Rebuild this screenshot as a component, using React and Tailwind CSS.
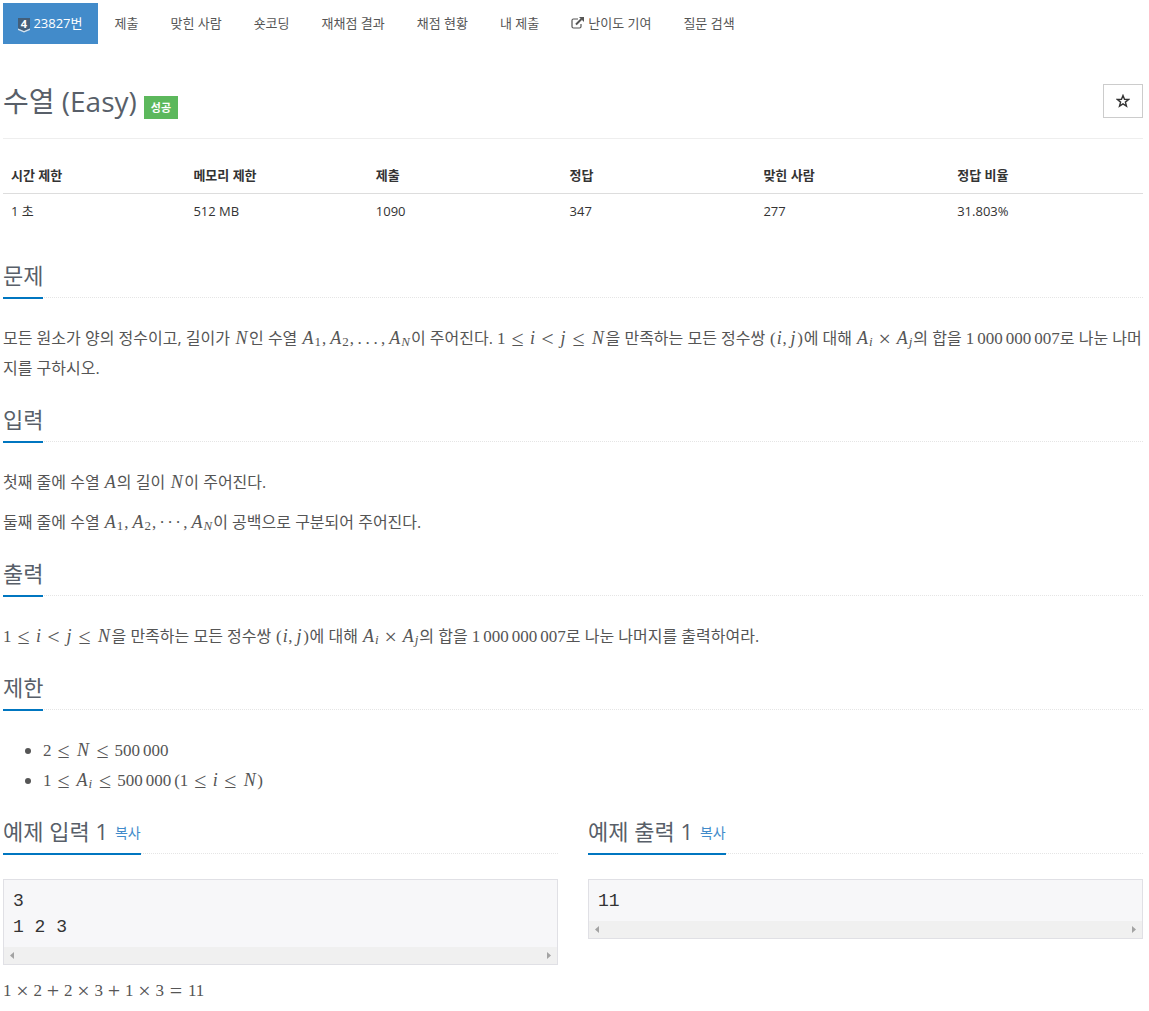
const NAV_ITEMS = [
  { label: '제출' },
  { label: '맞힌 사람' },
  { label: '숏코딩' },
  { label: '재채점 결과' },
  { label: '채점 현황' },
  { label: '내 제출' },
  { label: '난이도 기여', external: true },
  { label: '질문 검색' },
]

const INFO = [
  { label: '시간 제한', value: '1 초', width: 'w-[16%]' },
  { label: '메모리 제한', value: '512 MB', width: 'w-[16%]' },
  { label: '제출', value: '1090', width: 'w-[17%]' },
  { label: '정답', value: '347', width: 'w-[17%]' },
  { label: '맞힌 사람', value: '277', width: 'w-[17%]' },
  { label: '정답 비율', value: '31.803%', width: 'w-[17%]' },
]

const VAR_WIDTHS = {
  A: 'w-[13px]',
  N: 'w-[15px]',
  i: 'w-[6px]',
  j: 'w-[7px]',
}

/* Math */
const M = ({ children }) => (
  <span className="inline-block whitespace-nowrap font-['Liberation_Serif',serif] text-[17px] leading-5">{children}</span>
)

const V = ({ children }) => (
  <i className={`inline-block text-center text-lg leading-5 ${VAR_WIDTHS[children]}`}>{children}</i>
)

const Sub = ({ children, italic }) => (
  <sub className={`relative top-[2px] align-baseline text-[13px] leading-none ${italic ? 'italic' : ''} pr-px`}>{children}</sub>
)

const Rel = ({ children }) => (
  <span className="mx-[5px] inline-block w-[14px] text-center align-[-2px] text-[22px] leading-5">{children}</span>
)

const Bin = ({ children }) => (
  <span className="mx-1 inline-block w-[14px] text-center align-[-2px] text-[22px] leading-5">{children}</span>
)

const Comma = () => <span className="mr-[3px]">,</span>

const Paren = ({ children }) => (
  <span className="inline-block w-[7px] text-center">{children}</span>
)

const Dots = ({ char }) => (
  <>
    {[0, 1, 2].map(n => (
      <span key={n} className="mr-[3px] inline-block w-[5px] text-center">{char}</span>
    ))}
  </>
)

const Num = ({ groups }) => (
  <span className="inline-flex gap-[3px]">
    {groups.map((g, n) => <span key={n}>{g}</span>)}
  </span>
)

const Range = () => (
  <M>1<Rel>≤</Rel><V>i</V><Rel>&lt;</Rel><V>j</V><Rel>≤</Rel><V>N</V></M>
)

const Pair = () => <M><Paren>(</Paren><V>i</V><Comma /><V>j</V><Paren>)</Paren></M>

const Product = () => (
  <M><V>A</V><Sub italic>i</Sub><Bin>×</Bin><V>A</V><Sub italic>j</Sub></M>
)

const Sequence = ({ dots }) => (
  <M>
    <V>A</V><Sub>1</Sub><Comma /><V>A</V><Sub>2</Sub><Comma /><Dots char={dots} /><Comma /><V>A</V><Sub italic>N</Sub>
  </M>
)

const Modulus = () => <M><Num groups={['1', '000', '000', '007']} /></M>

function TierBadge() {
  return (
    <svg className="inline-block h-4 w-3 overflow-visible align-middle" viewBox="0 0 12 16" aria-hidden="true">
      <path d="M0 1h12v10.500l-6 3-6-3z" fill="#435f7a" />
      <path d="M0 11.500l6 2.600 6-2.600v1.500l-6 2.600-6-2.600z" fill="#d5e3ef" />
      <text x="6" y="11" textAnchor="middle" fontSize="11" fontWeight="700" fontFamily="Open Sans, sans-serif" fill="#fff">4</text>
    </svg>
  )
}

function ExternalIcon() {
  return (
    <svg className="mr-1 inline-block h-3 w-[13px] align-[-1px]" viewBox="0 0 13 12" fill="none" stroke="#555" aria-hidden="true">
      <path d="M7 2H2.500Q1 2 1 3.500V9.500Q1 11 2.500 11H8.500Q10 11 10 9.500V7" strokeWidth="1.200" />
      <path d="M5 7.500L10.500 2" strokeWidth="2" />
      <path d="M8 0h5v5z" fill="#555" stroke="none" />
    </svg>
  )
}

function Headline({ children }) {
  return (
    <div className="mb-[25px] border-b border-dotted border-[#e5e5e5]">
      <h2 className="-mb-[2px] inline-block border-b-2 border-[#0076c0] pb-[6px] align-top text-[22px] leading-8 font-normal text-[#585f69]">
        {children}
      </h2>
    </div>
  )
}

function Section({ title, children }) {
  return (
    <section className="mb-5">
      <Headline>{title}</Headline>
      <div className="space-y-[10px]">{children}</div>
    </section>
  )
}

function Sample({ title, children }) {
  return (
    <section>
      <Headline>
        {title}
        <button className="ml-[7px] align-[2px] text-sm text-[#428bca]">복사</button>
      </Headline>
      <div className="border border-[#e0e0e5] bg-[#f7f7f9]">
        <pre className="px-[9px] pt-2 pb-[7px] font-['Liberation_Mono',monospace] text-lg leading-[26px] text-[#333333]">{children}</pre>
        <div className="flex h-[17px] items-center justify-between bg-[#f0f0f0] px-[6px]">
          <svg className="h-[7px] w-1" viewBox="0 0 4 7" fill="#a3a3a3"><path d="M4 0v7L0 3.500z" /></svg>
          <svg className="h-[7px] w-1" viewBox="0 0 4 7" fill="#a3a3a3"><path d="M0 0v7l4-3.500z" /></svg>
        </div>
      </div>
    </section>
  )
}

export default function App() {
  return (
    <div className="min-h-screen bg-white pt-[3px] pr-[6px] pb-[6px] pl-[3px] font-['Open_Sans','Noto_Sans_CJK_KR',sans-serif] text-[13px] text-[#333333]">
      <nav className="flex gap-[2px] leading-[21px] text-[#555555]">
        <a href="#problem" className="bg-[#428bca] px-[15px] py-[10px] text-white">
          <TierBadge /> 23827번
        </a>
        {NAV_ITEMS.map(item => (
          <a key={item.label} href="#menu" className="px-[15px] py-[10px]">
            {item.external && <ExternalIcon />}
            {item.label}
          </a>
        ))}
      </nav>

      <header className="mt-10 mb-5 flex items-start justify-between border-b border-[#eeeeee] pb-[19px]">
        <div className="flex items-end gap-[7px]">
          <h1 className="text-[28px] leading-[35px] font-normal text-[#585f69]">수열 (Easy)</h1>
          <span className="bg-[#5cb85c] px-[7px] text-[11px] leading-[23px] font-bold text-white">성공</span>
        </div>
        <button aria-label="즐겨찾기" className="flex h-[34px] w-10 items-center justify-center border border-[#cccccc]">
          <svg className="h-[14px] w-[14px]" viewBox="0 0 14 14" fill="none" stroke="#333" strokeWidth="1.400" aria-hidden="true">
            <path d="M7 1.500l1.500 3.800 4.100.2-3.200 2.600 1.100 4L7 9.800l-3.500 2.300 1.100-4L1.400 5.500l4.100-.2z" />
          </svg>
        </button>
      </header>

      <table className="mb-[31px] w-full table-fixed text-left leading-[18px]">
        <thead>
          <tr className="border-b border-[#dddddd]">
            {INFO.map(col => (
              <th key={col.label} className={`${col.width} px-2 pt-[7px] pb-[9px] font-bold`}>{col.label}</th>
            ))}
          </tr>
        </thead>
        <tbody>
          <tr>
            {INFO.map(col => <td key={col.label} className="p-2">{col.value}</td>)}
          </tr>
        </tbody>
      </table>

      <main className="text-base leading-[30px] text-[#555555]">
        <Section title="문제">
          <p>
            모든 원소가 양의 정수이고, 길이가 <M><V>N</V></M>인 수열 <Sequence dots="." />이 주어진다. <Range />을 만족하는 모든 정수쌍 <Pair />에 대해 <Product />의 합을 <Modulus />로 나눈 나머지를 구하시오.
          </p>
        </Section>

        <Section title="입력">
          <p>첫째 줄에 수열 <M><V>A</V></M>의 길이 <M><V>N</V></M>이 주어진다.</p>
          <p>둘째 줄에 수열 <Sequence dots="·" />이 공백으로 구분되어 주어진다.</p>
        </Section>

        <Section title="출력">
          <p>
            <Range />을 만족하는 모든 정수쌍 <Pair />에 대해 <Product />의 합을 <Modulus />로 나눈 나머지를 출력하여라.
          </p>
        </Section>

        <Section title="제한">
          <ul className="list-disc pl-10">
            <li><M>2<Rel>≤</Rel><V>N</V><Rel>≤</Rel><Num groups={['500', '000']} /></M></li>
            <li>
              <M>
                1<Rel>≤</Rel><V>A</V><Sub italic>i</Sub><Rel>≤</Rel><Num groups={['500', '000']} />
                <span className="ml-[3px]">(1</span><Rel>≤</Rel><V>i</V><Rel>≤</Rel><V>N</V>)
              </M>
            </li>
          </ul>
        </Section>

        <div className="grid grid-cols-2 items-start gap-[30px]">
          <Sample title="예제 입력 1">{'3\n1 2 3'}</Sample>
          <Sample title="예제 출력 1">11</Sample>
        </div>

        <p className="mt-[10px]">
          <M>1<Bin>×</Bin>2<Bin>+</Bin>2<Bin>×</Bin>3<Bin>+</Bin>1<Bin>×</Bin>3<Rel>=</Rel>11</M>
        </p>
      </main>
    </div>
  )
}
